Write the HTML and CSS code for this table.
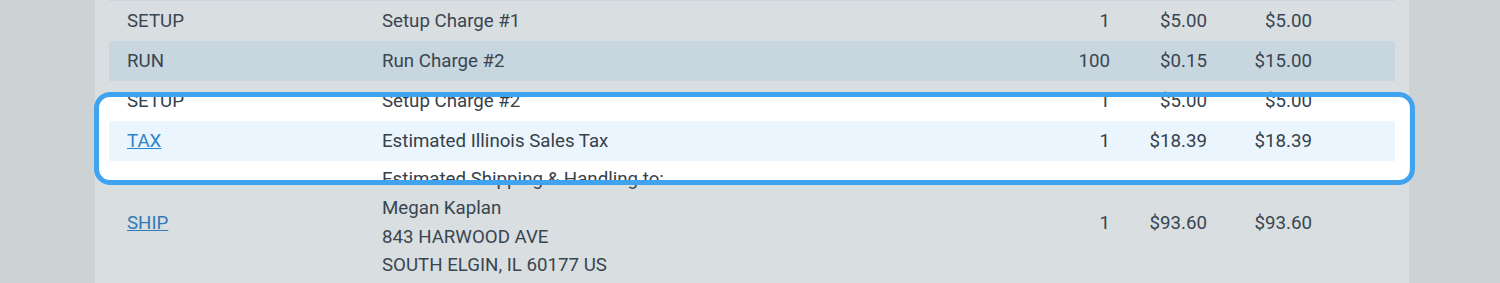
FILE: index.html
```html
<!DOCTYPE html>
<html lang="en">
<head>
  <meta charset="UTF-8" />
  <meta name="viewport" content="width=device-width, initial-scale=1.0"/>
  <title>Order Charges</title>
  <link rel="stylesheet" href="styles.css">
</head>
<body>
  <div class="panel">
    <table class="charges">
      <colgroup>
        <col class="col-code">
        <col class="col-desc">
        <col class="col-qty">
        <col class="col-price">
        <col class="col-total">
        <col class="col-spacer">
      </colgroup>
      <tbody>
        <tr class="striped">
          <td>RUN</td>
          <td>Run Charge #1</td>
          <td class="num">100</td>
          <td class="num">$0.15</td>
          <td class="num">$15.00</td>
          <td></td>
        </tr>
        <tr>
          <td>SETUP</td>
          <td>Setup Charge #1</td>
          <td class="num">1</td>
          <td class="num">$5.00</td>
          <td class="num">$5.00</td>
          <td></td>
        </tr>
        <tr class="striped">
          <td>RUN</td>
          <td>Run Charge #2</td>
          <td class="num">100</td>
          <td class="num">$0.15</td>
          <td class="num">$15.00</td>
          <td></td>
        </tr>
        <tr>
          <td>SETUP</td>
          <td>Setup Charge #2</td>
          <td class="num">1</td>
          <td class="num">$5.00</td>
          <td class="num">$5.00</td>
          <td></td>
        </tr>
        <tr class="striped">
          <td><a href="#">TAX</a></td>
          <td>Estimated Illinois Sales Tax</td>
          <td class="num">1</td>
          <td class="num">$18.39</td>
          <td class="num">$18.39</td>
          <td></td>
        </tr>
        <tr class="ship">
          <td><a href="#">SHIP</a></td>
          <td class="address">
            Estimated Shipping &amp; Handling to:<br>
            Megan Kaplan<br>
            843 HARWOOD AVE<br>
            SOUTH ELGIN, IL 60177 US
          </td>
          <td class="num">1</td>
          <td class="num">$93.60</td>
          <td class="num">$93.60</td>
          <td></td>
        </tr>
      </tbody>
    </table>
  </div>

  <!-- tutorial spotlight over the tax row -->
  <div class="spotlight"></div>
</body>
</html>
```

FILE: styles.css
```css
body {
  margin: 0;
  background: #f1f1f1;
  font-family: Roboto, "Liberation Sans", Arial, sans-serif;
  font-size: 18.7px;
  color: #37414a;
  overflow: hidden;
}

.panel {
  width: 1314px;
  margin: -39px 0 0 95px;
  padding: 0 14px;
  box-sizing: border-box;
  background: white;
}

.charges {
  width: 100%;
  border-collapse: collapse;
  table-layout: fixed;
}

.col-code { width: 255px; }
.col-qty { width: 100px; }
.col-price { width: 97px; }
.col-total { width: 105px; }
.col-spacer { width: 65px; }

.charges td {
  height: 40px;
  padding: 0 18px;
  line-height: 28.8px;
  vertical-align: middle;
  box-sizing: border-box;
  white-space: nowrap;
}

.charges tr.striped td {
  background: #eaf5fd;
}

.charges td.num {
  text-align: right;
}

.charges td.address {
  padding-top: 4px;
  padding-bottom: 6px;
}

.charges a {
  color: #2e84cc;
  text-decoration: underline;
}

.spotlight {
  position: absolute;
  left: 94px;
  top: 92px;
  width: 1321px;
  height: 93px;
  box-sizing: border-box;
  border: 5px solid #3fa3ef;
  border-radius: 16px;
  box-shadow: 0 0 0 2000px rgba(65, 90, 105, 0.2);
}
```
